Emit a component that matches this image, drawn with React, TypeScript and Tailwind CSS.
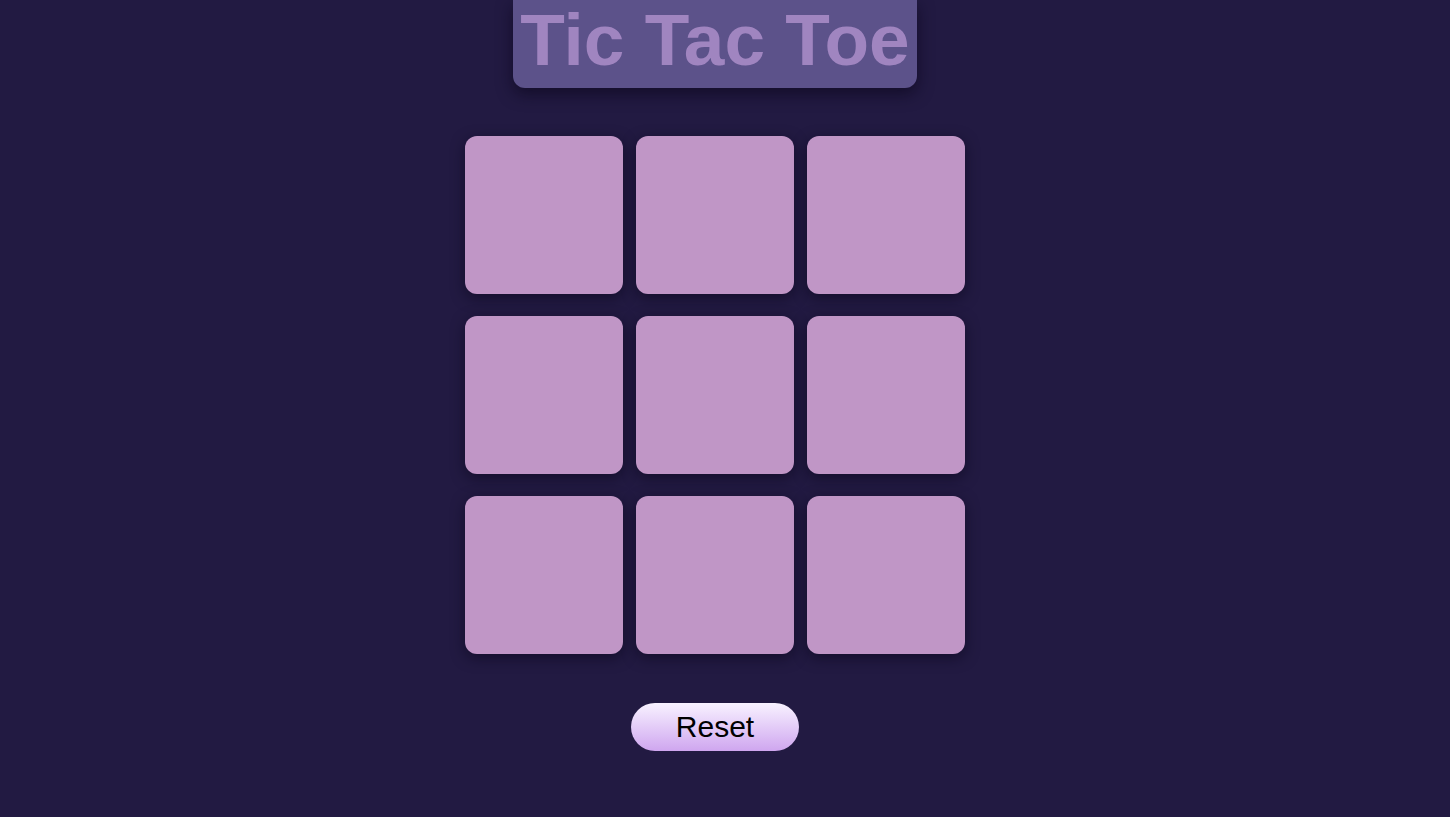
import React from "react";

export default function App() {
  const cells = Array.from({ length: 9 });
  return (
    <div className="min-h-[817px] w-full bg-[#221a42] pr-[20px]" style={{ fontFamily: '"Liberation Sans", Arial, sans-serif' }}>
      <div className="flex flex-col items-center">
        <div className="h-[88px] w-[404px] rounded-b-[12px] bg-[#5c528a] shadow-[0_6px_16px_rgba(10,5,25,0.6)] flex items-end justify-center">
          <h1 className="text-[73px] font-bold leading-none text-[#a085c0] pb-[12px]">Tic Tac Toe</h1>
        </div>
        <div className="mt-[48px] grid grid-cols-[158px_158px_158px] gap-x-[13px] gap-y-[22px]">
          {cells.map((_, i) => (
            <div
              key={i}
              className="h-[158px] w-[158px] rounded-[12px] bg-[#c096c6] shadow-[0_4px_14px_rgba(10,5,25,0.55)]"
            />
          ))}
        </div>
        <button className="mt-[49px] h-[48px] w-[168px] rounded-full bg-gradient-to-b from-[#f8f2ff] to-[#cfa6ef] text-[30px] text-black leading-none">
          Reset
        </button>
      </div>
    </div>
  );
}
